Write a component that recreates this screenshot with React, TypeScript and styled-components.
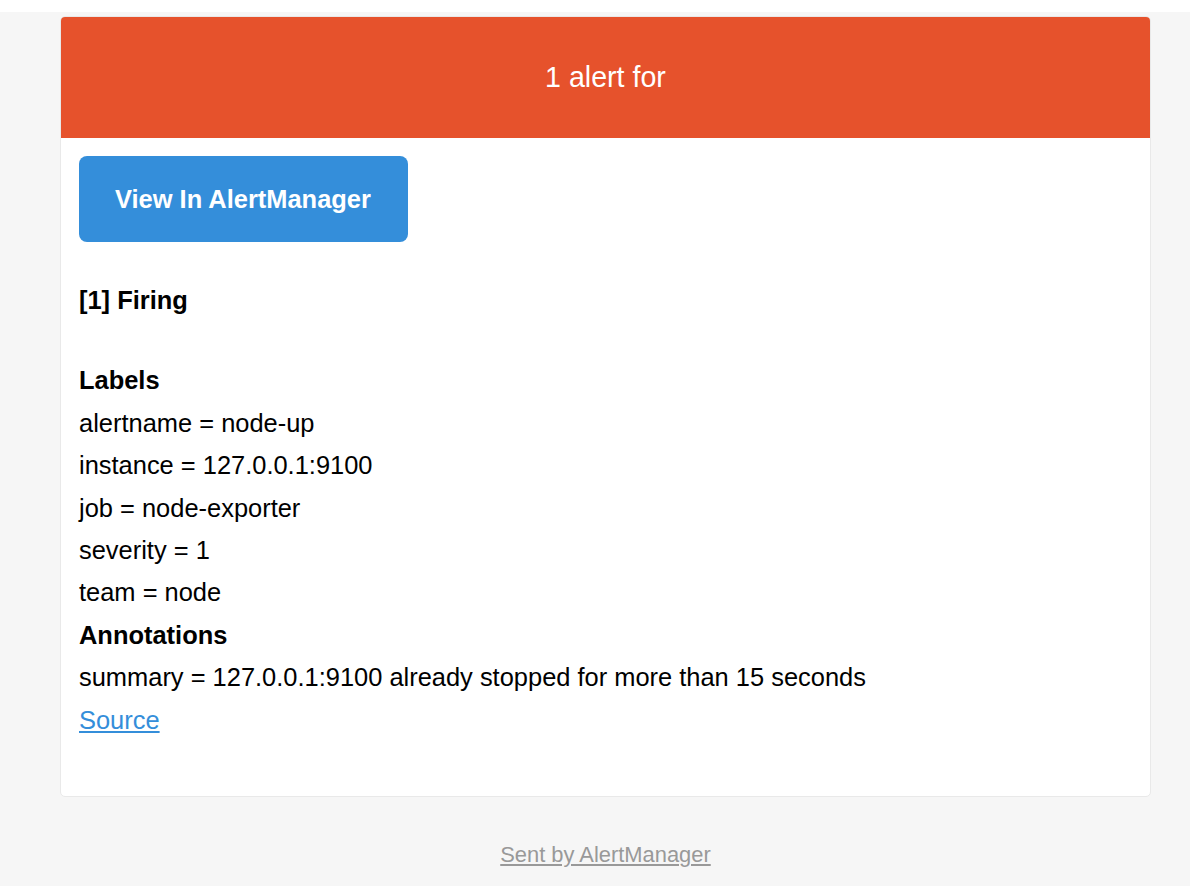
import styled, { createGlobalStyle } from 'styled-components';

const GlobalStyle = createGlobalStyle`
  html, body {
    margin: 0;
    padding: 0;
    background: #fff;
  }
  * {
    box-sizing: border-box;
    font-family: 'Liberation Sans', Arial, Helvetica, sans-serif;
  }
`;

const labels = [
  { name: 'alertname', value: 'node-up' },
  { name: 'instance', value: '127.0.0.1:9100' },
  { name: 'job', value: 'node-exporter' },
  { name: 'severity', value: '1' },
  { name: 'team', value: 'node' },
];

const annotations = [{ name: 'summary', value: '127.0.0.1:9100 already stopped for more than 15 seconds' }];

const App = () => {
  return (
    <>
      <GlobalStyle />
      <BodyWrap>
        <Main>
          <AlertHeader>1 alert for</AlertHeader>
          <ContentWrap>
            <Block $gap={37}>
              <PrimaryButton href="#">View In AlertManager</PrimaryButton>
            </Block>
            <Block $gap={38}>
              <Strong>[1] Firing</Strong>
            </Block>
            <Block $gap={37}>
              <Strong>Labels</Strong>
              {labels.map((l) => (
                <Line key={l.name}>
                  {l.name} = {l.value}
                </Line>
              ))}
              <Strong>Annotations</Strong>
              {annotations.map((a) => (
                <Line key={a.name}>
                  {a.name} = {a.value}
                </Line>
              ))}
              <Line>
                <SourceLink href="#">Source</SourceLink>
              </Line>
            </Block>
          </ContentWrap>
        </Main>
        <Footer>
          <FooterLink href="#">Sent by AlertManager</FooterLink>
        </Footer>
      </BodyWrap>
    </>
  );
};

export default App;

const BodyWrap = styled.div`
  margin-top: 12px;
  min-height: calc(100vh - 12px);
  background: #f6f6f6;
  padding: 4px 39px 0 60px;
`;

const Main = styled.div`
  background: #fff;
  border: 1px solid #e9e9e9;
  border-radius: 5px;
  overflow: hidden;
`;

const AlertHeader = styled.div`
  background: #e6522c;
  color: #fff;
  font-size: 28.6px;
  line-height: 49px;
  padding: 36px;
  text-align: center;
`;

const ContentWrap = styled.div`
  padding: 18px;
`;

const Block = styled.div<{ $gap: number }>`
  padding-bottom: ${(p) => p.$gap}px;
  font-size: 25.45px;
  line-height: 42.4px;
  color: #000;
`;

const PrimaryButton = styled.a`
  display: inline-block;
  background: #348eda;
  color: #fff;
  font-weight: bold;
  font-size: 25.45px;
  line-height: 50px;
  padding: 18px 37px 18px 36px;
  border-radius: 8px;
  text-decoration: none;
`;

const Strong = styled.div`
  font-weight: bold;
`;

const Line = styled.div``;

const SourceLink = styled.a`
  color: #348eda;
  text-decoration: underline;
`;

const Footer = styled.div`
  padding: 41px 20px 20px;
  text-align: center;
  font-size: 21.9px;
  line-height: 34px;
`;

const FooterLink = styled.a`
  color: #999;
  text-decoration: underline;
`;
